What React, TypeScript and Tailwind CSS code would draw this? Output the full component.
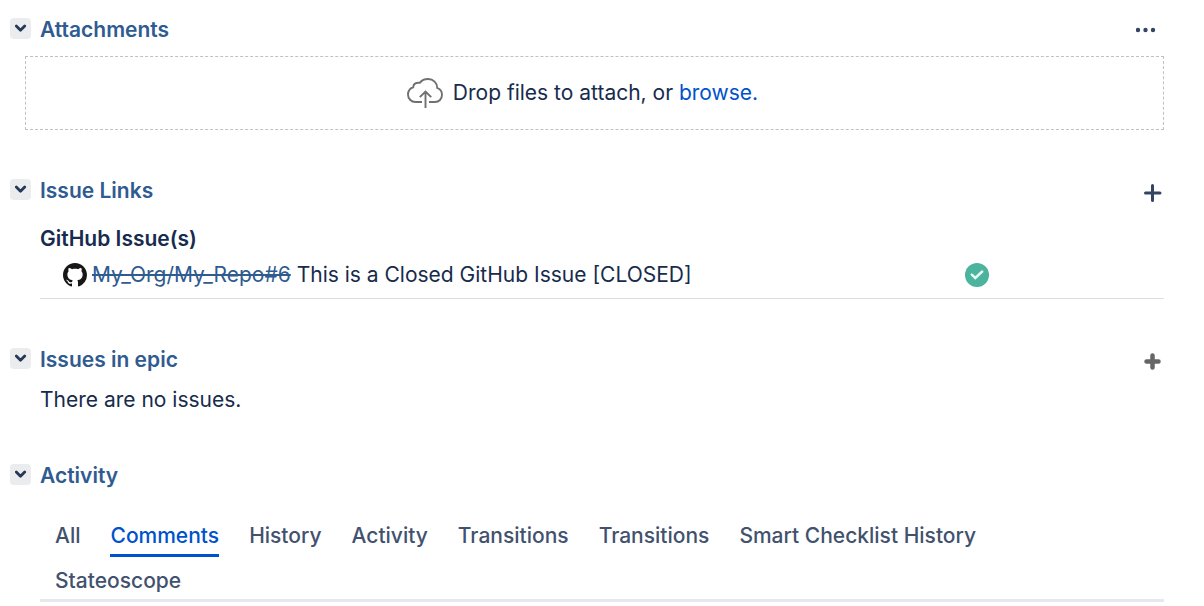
import React from "react";

type SectionProps = {
  title: string;
  action?: React.ReactNode;
  children: React.ReactNode;
};

function Section({ title, action, children }: SectionProps) {
  return (
    <section>
      <header className="flex h-7 items-center">
        <button
          type="button"
          aria-label={"Toggle " + title}
          className="mb-1 ml-2.5 flex size-[21px] items-center justify-center rounded bg-[#ebecee]"
        >
          <svg viewBox="0 0 12 12" className="size-3" fill="none" stroke="#253858" strokeWidth="2.8" strokeLinecap="round" strokeLinejoin="round">
            <path d="M1.300 4L5.500 8.200L9.700 4" />
          </svg>
        </button>
        <h2 className="ml-[9px] font-semibold text-[#2f5b90]">{title}</h2>
        {action}
      </header>
      {children}
    </section>
  );
}

const tabs = [
  "All",
  "Comments",
  "History",
  "Activity",
  "Transitions",
  "Transitions",
  "Smart Checklist History",
  "Stateoscope",
];

export default function App() {
  return (
    <main className="flex flex-col bg-white pt-4 pr-10 font-[Inter,sans-serif] text-[21px] leading-7 text-[#172b4d]">
      <Section
        title="Attachments"
        action={
          <button type="button" aria-label="More options" className="mr-2 ml-auto">
            <svg viewBox="0 0 20 6" className="h-1.5 w-5" fill="#344563">
              <circle cx="2" cy="3" r="2.200" />
              <circle cx="9.500" cy="3" r="2.200" />
              <circle cx="17" cy="3" r="2.200" />
            </svg>
          </button>
        }
      >
        <div className="mt-3 ml-[25px] flex h-[74px] items-center justify-center border border-dashed border-[#c1c1c1] pr-6">
          <svg viewBox="0 0 36 30" className="mr-2.5 h-[30px] w-9" fill="none" stroke="#707070" strokeWidth="1.900">
            <path d="M15 24H8.500C4 24 1 20.500 1 16.500C1 12.800 3.500 9.800 6.200 9.200C6.200 6 8.800 4.300 12.800 4.800C14.800 2.200 17.800 1 21 1C26.500 1 30.200 5 30.200 9.800C33 10.800 35 13.500 35 16.800C35 21 32 24 28 24H22" />
            <path d="M18.500 30V14M12.800 19.200L18.500 13.500L24.200 19.200" />
          </svg>
          <p>
            Drop files to attach, or{" "}
            <a href="#browse" className="text-[#0052cc]">browse.</a>
          </p>
        </div>
      </Section>

      <div className="mt-[47px]">
        <Section
          title="Issue Links"
          action={
            <button type="button" aria-label="Add issue link" className="mt-1 mr-0.5 ml-auto">
              <svg viewBox="0 0 18 18" className="size-[18px]" fill="none" stroke="#344563" strokeWidth="3" strokeLinecap="round">
                <path d="M8.500 1.500V16.500M1.500 9H16" />
              </svg>
            </button>
          }
        >
          <div className="mt-5 ml-10">
            <h3 className="font-semibold">GitHub Issue(s)</h3>
            <div className="flex items-center border-b border-[#dcdde3] pt-2 pr-[175px] pb-[9px] pl-[23px]">
              <svg viewBox="0 0 16 16" className="mr-[5px] size-6 shrink-0" fill="#181717">
                <path d="M8 0C3.580 0 0 3.580 0 8c0 3.540 2.290 6.530 5.470 7.590.4.070.55-.17.55-.38 0-.19-.01-.82-.01-1.490-2.010.37-2.530-.49-2.690-.94-.09-.23-.48-.94-.82-1.130-.28-.15-.68-.52-.01-.53.63-.01 1.080.58 1.230.82.72 1.210 1.870.87 2.330.66.07-.52.28-.87.51-1.070-1.780-.2-3.640-.89-3.640-3.950 0-.87.31-1.590.82-2.150-.08-.2-.36-1.020.08-2.120 0 0 .67-.21 2.200.82.64-.18 1.320-.27 2-.27s1.360.09 2 .27c1.530-1.040 2.200-.82 2.200-.82.44 1.100.16 1.920.08 2.120.51.56.82 1.270.82 2.150 0 3.070-1.870 3.750-3.650 3.950.29.25.54.73.54 1.480 0 1.070-.01 1.930-.01 2.200 0 .21.15.46.55.38A8.010 8.010 0 0 0 16 8c0-4.420-3.580-8-8-8z" />
              </svg>
              <p>
                <a href="#issue" className="text-[#2f5b90] line-through decoration-2">My_Org/My_Repo#6</a>{" "}
                This is a Closed GitHub Issue [CLOSED]
              </p>
              <svg viewBox="0 0 24 24" role="img" aria-label="Closed" className="ml-auto size-6 shrink-0">
                <circle cx="12" cy="12" r="12" fill="#4bb39e" />
                <path d="M6.800 11.700L10.300 15L17.200 8.500" fill="none" stroke="#e6f8f3" strokeWidth="2.500" strokeLinecap="round" />
              </svg>
            </div>
          </div>
        </Section>
      </div>

      <div className="mt-[47px]">
        <Section
          title="Issues in epic"
          action={
            <button type="button" aria-label="Add issue to epic" className="mt-0.5 mr-[3px] ml-auto">
              <svg viewBox="0 0 17 17" className="size-[17px]" fill="none" stroke="#666" strokeWidth="4.500" strokeLinecap="round">
                <path d="M8.500 2.500V14.500M2.500 8.500H14.500" />
              </svg>
            </button>
          }
        >
          <p className="mt-3 ml-10">There are no issues.</p>
        </Section>
      </div>

      <div className="mt-12">
        <Section title="Activity">
          <nav className="mt-8 ml-10 flex flex-wrap gap-x-[30px] gap-y-2.5 border-b-3 border-[#e7e8ee] pr-16 pb-1 pl-[15px] font-medium text-[#42526e]">
            {tabs.map((tab, i) => (
              <a
                key={i}
                href={"#tab-" + i}
                className={tab === "Comments" ? "border-b-3 border-[#0052cc] pb-1 text-[#0052cc]" : ""}
              >
                {tab}
              </a>
            ))}
          </nav>
        </Section>
      </div>
    </main>
  );
}
